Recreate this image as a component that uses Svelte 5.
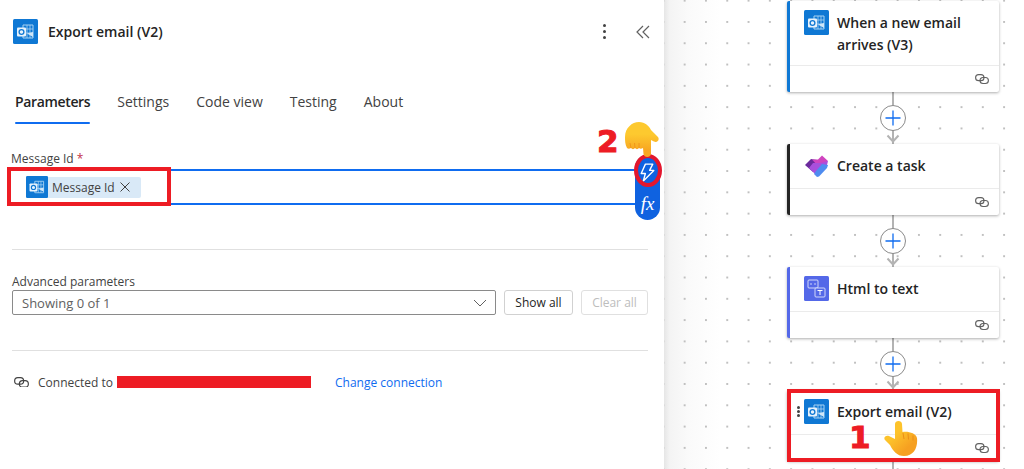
<script>
  const tabs = ["Parameters", "Settings", "Code view", "Testing", "About"];
  const cards = [
    { title: "When a new email arrives (V3)", kind: "outlook", accent: "#0f78d4", head: "tall" },
    { title: "Create a task", kind: "planner", accent: "#242424" },
    { title: "Html to text", kind: "html", accent: "#5468e8" },
    { title: "Export email (V2)", kind: "outlook", accent: "#0f78d4", selected: true }
  ];
</script>

{#snippet outlook(size)}
  <svg width={size} height={size} viewBox="0 0 25 25" class="icon">
    <rect width="25" height="25" rx="1.5" fill="#0f78d4" />
    <path d="M10 6h10v13H10z" fill="none" stroke="#a9d3f2" stroke-width="1" />
    <path d="M10 10h10M10 14h10M14 6v13M17 6v13" stroke="#a9d3f2" stroke-width=".8" />
    <path d="M14 14.5l6 3.5v-5z" fill="#cfe6f8" />
    <rect x="4" y="8.5" width="9" height="9" rx="1" fill="#e8f3fc" />
    <circle cx="8.5" cy="13" r="2.4" fill="none" stroke="#0f78d4" stroke-width="1.3" />
  </svg>
{/snippet}

{#snippet planner()}
  <svg width="25" height="25" viewBox="0 0 25 25" class="icon">
    <path d="M1 12l6-6 6 1-4 12z" fill="#6b2a9c" />
    <path d="M8 6.500h6l4-4 6 5.500-5 5-6-1z" fill="#d044bf" />
    <path d="M5 15l4-5h8l7-2-1 4-10 11z" fill="#a94fdc" />
    <path d="M12 18l6-7 6 1-1 3-8 8.500-2 .5-3-3z" fill="#4f8cf0" />
  </svg>
{/snippet}

{#snippet html()}
  <svg width="25" height="25" viewBox="0 0 25 25" class="icon">
    <rect width="25" height="25" rx="1.5" fill="#5468e8" />
    <rect x="4" y="4" width="10" height="8" rx="1" fill="none" stroke="#dfe4fc" stroke-width=".9" />
    <path d="M6.500 8l1 -1M6.500 8l1 1M11.500 8l-1 -1M11.500 8l-1 1" stroke="#fff" stroke-width=".7" />
    <rect x="11" y="12" width="10" height="9" rx="1" fill="#5468e8" stroke="#dfe4fc" stroke-width=".9" />
    <path d="M13.500 14.500h5M16 14.500v4.500" stroke="#fff" stroke-width="1" />
  </svg>
{/snippet}

{#snippet chain(w, stroke)}
  <svg width={w} height={w * 0.72} viewBox="0 0 14 10" class="icon" fill="none" stroke={stroke} stroke-width="1.100">
    <rect x=".6" y=".6" width="8.400" height="6" rx="3" />
    <rect x="5" y="3.400" width="8.400" height="6" rx="3" />
  </svg>
{/snippet}

<div class="page">
  <section class="panel">
    <header>
      {@render outlook(25)}
      <h1>Export email (V2)</h1>
      <span class="dots"><i></i><i></i><i></i></span>
      <svg class="collapse" width="14" height="14" viewBox="0 0 14 14" fill="none" stroke="#616161" stroke-width="1.200">
        <path d="M7 1L1 7l6 6M13 1L7 7l6 6" />
      </svg>
    </header>

    <nav>
      {#each tabs as tab, i}
        <span class:active={i === 0}>{tab}</span>
      {/each}
    </nav>

    <label class="msg-label" for="msg">Message Id <b>*</b></label>
    <div class="input" id="msg">
      <span class="token">
        {@render outlook(22)}
        <span class="token-text">Message Id</span>
        <svg width="10" height="10" viewBox="0 0 10 10" stroke="#424242" stroke-width="1"><path d="M.5 .5l9 9M9.500 .5l-9 9" /></svg>
      </span>
    </div>

    <hr class="first" />

    <div class="adv-label">Advanced parameters</div>
    <div class="adv-row">
      <div class="select">
        <span>Showing 0 of 1</span>
        <svg width="14" height="8" viewBox="0 0 14 8" fill="none" stroke="#616161" stroke-width="1"><path d="M1 1l6 6 6-6" /></svg>
      </div>
      <button class="show">Show all</button>
      <button class="clear" disabled>Clear all</button>
    </div>

    <hr class="second" />

    <div class="conn">
      {@render chain(15, "#424242")}
      <span class="conn-text">Connected to</span>
      <span class="redact"></span>
      <span class="change">Change connection</span>
    </div>

    <!-- annotations over the form -->
    <div class="box box-token"></div>
    <div class="side-pill">
      <svg width="17" height="21" viewBox="0 0 16 20" fill="none" stroke="#fff" stroke-width="1.300" stroke-linejoin="round">
        <path d="M6 2h7L10 8h4L4 18l2-7H2z" />
      </svg>
      <span class="fx">fx</span>
    </div>
    <div class="ring"></div>
    <span class="num two">2</span>
    <svg class="hand hand-two" width="34" height="36" viewBox="0 0 34 36">
      <defs>
        <linearGradient id="handDown" x1="0" y1="0" x2="0" y2="1">
          <stop offset="0.35" stop-color="#fdc92f" />
          <stop offset="0.8" stop-color="#f8a722" />
        </linearGradient>
      </defs>
      <path d="M0 15C0 6 7 0 14 0c6 0 10 4 12 8l7 7c2 3-1 6-4 4.500L26 18l0 14c-.5 4-7 4-7.500 0L18 26c-1.500 1-3 1-4 0-1 1.500-3 1.500-4 0-1 1.500-3 1.500-4 0-1.500 1-3 1-4 0C0 22 0 19 0 15z" fill="url(#handDown)" />
      <path d="M6 26l-1-5M10 26l-.5-5M14 26l0-5" stroke="#ef8f17" stroke-width=".8" fill="none" />
    </svg>
  </section>

  <section class="canvas">
    {#each cards as card, i}
      <article class="card" class:tall={card.head === "tall"} style="border-left-color: {card.accent}">
        <div class="card-head">
          {#if card.selected}
            <span class="grip"><i></i><i></i><i></i></span>
          {/if}
          {#if card.kind === "outlook"}
            {@render outlook(25)}
          {:else if card.kind === "planner"}
            {@render planner()}
          {:else}
            {@render html()}
          {/if}
          <h2>{card.title}</h2>
        </div>
        <div class="card-foot">{@render chain(14, "#616161")}</div>
        {#if card.selected}
          <div class="box box-card"></div>
          <span class="num one">1</span>
          <svg class="hand hand-one" width="34" height="36" viewBox="0 0 34 36">
            <defs>
              <linearGradient id="handUp" x1="0.1" y1="0.1" x2="0.8" y2="0.9">
                <stop offset="0.35" stop-color="#fdc32b" />
                <stop offset="0.85" stop-color="#f6a021" />
              </linearGradient>
            </defs>
            <path d="M11 3c0-4 7-4 7 0l.5 8c5.500-1 13.500 1 14.500 6 1 9-3 18-13 18-7 0-11-5-14-11l-5-5c-2-3 1-5 4-4l6 3z" fill="url(#handUp)" />
            <path d="M19 12l1 6M24 12.500l.5 6M29 14.500l0 5" stroke="#e98a16" stroke-width=".9" fill="none" />
          </svg>
        {/if}
      </article>
      <svg class="link" width="28" height={i === 3 ? 10 : 52} viewBox="0 0 28 {i === 3 ? 10 : 52}">
        <path d="M14 0v52" stroke="#b3b3b3" stroke-width="2" />
        {#if i < 3}
          <path d="M8.500 43.500l5.500 6 5.500-6" fill="none" stroke="#b3b3b3" stroke-width="2" />
          <circle cx="14" cy="26" r="12.500" fill="#fff" stroke="#8a8a8a" />
          <path d="M14 18.500v15M6.500 26h15" stroke="#0f6cf0" stroke-width="1.300" />
        {/if}
      </svg>
    {/each}
  </section>
</div>

<style>
  :global(body) {
    margin: 0;
    background: #fff;
  }

  .page {
    display: flex;
    width: 1024px;
    height: 469px;
    overflow: hidden;
    font-family: "Open Sans", "Noto Sans", sans-serif;
    color: #242424;
  }

  .icon {
    display: block;
    flex: none;
  }

  hr {
    border: 0;
    border-top: 1px solid #e0e0e0;
    margin: 0 16px 0 12px;
  }

  /* left panel */
  .panel {
    position: relative;
    width: 664px;
    flex: none;
    background: #fff;
    z-index: 1;
  }

  header {
    display: flex;
    align-items: center;
    height: 25px;
    padding: 19px 14px 0 13px;
  }

  h1 {
    margin: 0 0 0 10px;
    font-size: 14px;
    font-weight: 600;
    flex: 1;
  }

  .dots {
    display: flex;
    flex-direction: column;
    gap: 3px;
    margin-right: 30px;
  }

  .dots i,
  .grip i {
    display: block;
    width: 3px;
    height: 3px;
    border-radius: 50%;
    background: #424242;
  }

  nav {
    display: flex;
    gap: 27px;
    margin: 48px 0 0 15px;
    font-size: 14px;
    color: #424242;
  }

  nav span {
    height: 22px;
    position: relative;
  }

  nav .active {
    font-weight: 600;
    letter-spacing: -0.35px;
    color: #242424;
  }

  nav .active::after {
    content: "";
    position: absolute;
    left: 0;
    right: 0;
    top: 30px;
    height: 2px;
    border-radius: 2px;
    background: #0f6cf0;
  }

  .msg-label {
    display: block;
    margin: 37px 0 0 11px;
    font-size: 12px;
    line-height: 16px;
    color: #424242;
  }

  .msg-label b {
    color: #c4314b;
    font-weight: 400;
  }

  .input {
    box-sizing: border-box;
    display: flex;
    align-items: center;
    width: 625px;
    height: 36px;
    margin: 2px 0 0 11px;
    padding-left: 15px;
    border-top: 2px solid #0f6cf0;
    border-bottom: 2px solid #0f6cf0;
  }

  .token {
    display: flex;
    align-items: center;
    height: 21px;
    width: 115px;
    border-radius: 2px;
    background: #d9e9f7;
    font-size: 12px;
    color: #424242;
  }

  .token-text {
    margin: 0 5px 0 4px;
    white-space: nowrap;
  }

  hr.first {
    margin-top: 44px;
  }

  .adv-label {
    margin: 24px 0 0 12px;
    font-size: 12px;
    line-height: 16px;
    color: #424242;
  }

  .adv-row {
    display: flex;
    gap: 8px;
    margin: 0 16px 0 12px;
    height: 25px;
  }

  .select {
    box-sizing: border-box;
    display: flex;
    align-items: center;
    justify-content: space-between;
    flex: 1;
    padding: 0 8px 0 9px;
    border: 1px solid #8a8a8a;
    border-radius: 2px;
    font-size: 13px;
    color: #616161;
  }

  button {
    box-sizing: border-box;
    width: 69px;
    padding: 0;
    border: 1px solid #d1d1d1;
    border-radius: 3px;
    background: #fff;
    font: 12px "Open Sans", "Noto Sans", sans-serif;
    color: #242424;
  }

  .clear {
    width: 67px;
    border-color: #e0e0e0;
    color: #bdbdbd;
  }

  hr.second {
    margin-top: 35px;
  }

  .conn {
    display: flex;
    align-items: center;
    height: 14px;
    margin: 24px 0 0 14px;
    font-size: 12px;
    color: #424242;
  }

  .conn-text {
    margin-left: 9px;
    width: 79px;
    white-space: nowrap;
  }

  .redact {
    width: 194px;
    height: 12px;
    background: #ed1c24;
  }

  .change {
    margin-left: 24px;
    color: #0f6cf0;
    white-space: nowrap;
  }

  /* annotations */
  .box {
    position: absolute;
    box-sizing: border-box;
    border: 4px solid #ed1c24;
  }

  .box-token {
    left: 7px;
    top: 167px;
    width: 164px;
    height: 39px;
  }

  .side-pill {
    position: absolute;
    left: 635px;
    top: 155px;
    width: 25px;
    height: 65px;
    display: flex;
    flex-direction: column;
    align-items: center;
    gap: 11px;
    padding-top: 7px;
    box-sizing: border-box;
    border-radius: 13px;
    background: #0f62e0;
  }

  .fx {
    font: italic 19px/19px "Liberation Serif", serif;
    color: #fff;
  }

  .ring {
    position: absolute;
    left: 634px;
    top: 154px;
    width: 28px;
    height: 33px;
    box-sizing: border-box;
    border: 4px solid #e3162d;
    border-radius: 50%;
  }

  .num {
    position: absolute;
    font: 700 31px/31px "DejaVu Sans", sans-serif;
    color: #ed1c24;
    -webkit-text-stroke: 1px #ed1c24;
  }

  .two {
    left: 597px;
    top: 126px;
  }

  .hand {
    position: absolute;
  }

  .hand-two {
    left: 625px;
    top: 122px;
  }

  /* flow canvas */
  .canvas {
    flex: 1;
    display: flex;
    flex-direction: column;
    align-items: flex-start;
    padding: 1px 0 0 123px;
    background-color: #fff;
    background-image:
      radial-gradient(circle, #c0c0c0 0.7px, transparent 1.1px),
      linear-gradient(90deg, #e6e6e6 0, #f4f4f4 6px, #fafafa 24px, #fff 56px);
    background-size: 21.3px 21.3px, 100% 100%;
    background-position: 10px -10px, 0 0;
  }

  .card {
    position: relative;
    box-sizing: border-box;
    width: 212px;
    flex: none;
    background: #fff;
    border-left: 3px solid #0f78d4;
    border-radius: 2px;
    box-shadow: 0 1px 3px rgba(0, 0, 0, 0.32);
  }

  .card-head {
    display: flex;
    align-items: flex-start;
    gap: 8px;
    height: 44px;
    box-sizing: border-box;
    padding: 9px 10px 0 14px;
  }

  .tall .card-head {
    height: 64px;
  }

  .grip {
    position: absolute;
    left: 7px;
    top: 16px;
    display: flex;
    flex-direction: column;
    gap: 1px;
  }

  h2 {
    margin: 2px 0 0;
    font-size: 14px;
    font-weight: 600;
    line-height: 22px;
    color: #242424;
  }

  .card-foot {
    display: flex;
    justify-content: flex-end;
    align-items: center;
    height: 27px;
    padding-right: 10px;
    border-top: 1px solid #ebebeb;
    box-sizing: border-box;
  }

  .link {
    display: block;
    flex: none;
    margin-left: 92px;
  }

  .box-card {
    left: -3px;
    top: -1px;
    width: 213px;
    height: 73px;
  }

  .one {
    left: 59px;
    top: 32px;
  }

  .hand-one {
    left: 94px;
    top: 31px;
  }
</style>
